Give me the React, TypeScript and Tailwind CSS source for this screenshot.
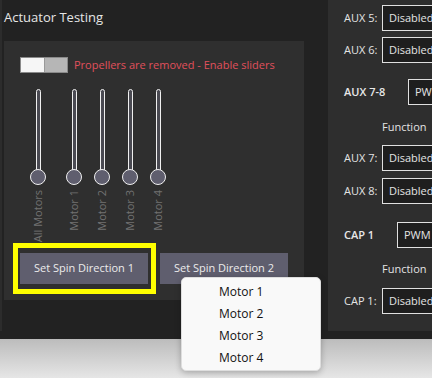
import React from "react"

const font = { fontFamily: '"Open Sans", "Noto Sans", sans-serif' }

const sliders = [
  { label: "All Motors", first: true },
  { label: "Motor 1" },
  { label: "Motor 2" },
  { label: "Motor 3" },
  { label: "Motor 4" },
]

function Slider({ label, first }: { label: string; first?: boolean }) {
  return (
    <div className={`flex w-[28px] flex-col items-center ${first ? "mr-[8px]" : ""}`}>
      <div className="h-[84px] w-[5px] rounded-t-full border border-[#f0f0f0] bg-[#4a4a52]" />
      <div className="-mt-[4px] h-[16px] w-[16px] rounded-full border-[1.5px] border-[#f0f0f0] bg-[#5f5e6e]" />
      <div className="mt-[5px] rotate-180 text-[11px] leading-[14px] whitespace-nowrap text-[#727272] [writing-mode:vertical-rl]">
        {label}
      </div>
    </div>
  )
}

function Select({ value, w = 80 }: { value: string; w?: number }) {
  return (
    <div
      className="h-[26px] shrink-0 border border-[#e0e0e0] bg-[#1e1e1e] pl-[6px] text-[11px] leading-[24px] text-[#e4e4e4]"
      style={{ width: w }}
    >
      {value}
    </div>
  )
}

function AuxRow({ label, value, className = "" }: { label: string; value: string; className?: string }) {
  return (
    <div className={`flex items-center ${className}`}>
      <span className="w-[38px] shrink-0 text-[11px] text-[#e4e4e4]">{label}</span>
      <Select value={value} />
    </div>
  )
}

export default function App() {
  return (
    <div className="relative flex h-[378px] w-[432px] flex-col overflow-hidden bg-[#222222]" style={font}>
      <div className="flex h-[339px] shrink-0">
        {/* left: actuator testing */}
        <div className="flex h-[331px] w-[328px] shrink-0 flex-col border-l-2 border-[#2c2c2c] pl-[2px]">
          <div className="h-[41px] pt-[7px] text-[13px] leading-[20px] text-[#e6e6e6]">Actuator Testing</div>
          <div className="flex h-[259px] w-[300px] flex-col bg-[#2f2f2f] pl-[9px]">
            <div className="mt-[16px] flex items-center pl-[7px]">
              <div className="flex h-[16px] w-[48px] border border-[#8a8a8a]">
                <div className="w-[23px] bg-[#f6f6f6]" />
                <div className="flex-1 border-l border-[#999] bg-[#b6b6b6]" />
              </div>
              <span className="ml-[6px] text-[11px] leading-[16px] text-[#e0505c]">
                Propellers are removed - Enable sliders
              </span>
            </div>
            <div className="mt-[16px] flex h-[154px] items-start pl-[11px]">
              {sliders.map((s) => (
                <Slider key={s.label} label={s.label} first={s.first} />
              ))}
            </div>
            <div className="flex items-center">
              <div className="border-[5px] border-[#ffff00] py-[5px] pl-[2px] pr-[3px]">
                <button className="h-[31px] w-[128px] bg-[#5f5e6e] text-[11px] text-[#ececec]">
                  Set Spin Direction 1
                </button>
              </div>
              <button className="ml-[4px] h-[31px] w-[128px] bg-[#5f5e6e] text-[11px] text-[#ececec]">
                Set Spin Direction 2
              </button>
            </div>
          </div>
        </div>

        {/* right: aux panel */}
        <div className="h-[331px] flex-1 overflow-hidden bg-[#2e2e2e] pl-[16px] pt-[5px]">
          <AuxRow label="AUX 5:" value="Disabled" />
          <AuxRow label="AUX 6:" value="Disabled" className="mt-[6px]" />
          <div className="mt-[16px] flex items-center">
            <span className="w-[64px] shrink-0 text-[11px] font-semibold text-[#e8e8e8]">AUX 7-8</span>
            <Select value="PWM" w={60} />
          </div>
          <div className="mt-[14px] ml-[38px] h-[16px] text-[11px] leading-[16px] text-[#e4e4e4]">Function</div>
          <AuxRow label="AUX 7:" value="Disabled" className="mt-[10px]" />
          <AuxRow label="AUX 8:" value="Disabled" className="mt-[7px]" />
          <div className="mt-[18px] flex items-center">
            <span className="w-[53px] shrink-0 text-[11px] font-semibold text-[#e8e8e8]">CAP 1</span>
            <Select value="PWM" w={60} />
          </div>
          <div className="mt-[13px] ml-[38px] h-[16px] text-[11px] leading-[16px] text-[#e4e4e4]">Function</div>
          <AuxRow label="CAP 1:" value="Disabled" className="mt-[11px]" />
        </div>
      </div>

      <div className="flex-1 bg-gradient-to-b from-[#bcbcbc] to-[#e6e6e6]" />

      {/* context menu */}
      <div className="absolute left-[181px] top-[277px] w-[140px] rounded-[5px] border border-[#dedede] bg-[#f9f9f9] pb-[1px] pt-[3px] shadow-[0_2px_6px_rgba(0,0,0,0.25)]">
        {["Motor 1", "Motor 2", "Motor 3", "Motor 4"].map((m) => (
          <div key={m} className="h-[22px] pl-[37px] text-[12px] leading-[22px] text-[#111]">
            {m}
          </div>
        ))}
      </div>
    </div>
  )
}
